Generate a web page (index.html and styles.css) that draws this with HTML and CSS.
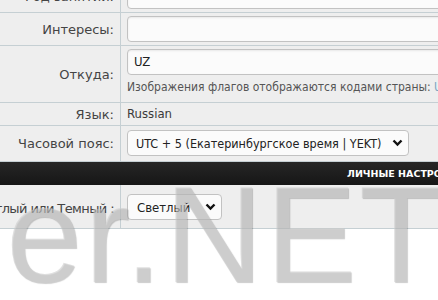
FILE: index.html
```html
<!DOCTYPE html>
<html lang="ru">

<head>
  <meta charset="UTF-8">
  <meta name="viewport" content="width=device-width, initial-scale=1.0">
  <title>Настройки профиля</title>
  <link rel="stylesheet" href="styles.css">
</head>

<body>
  <div class="form">
    <div class="row">
      <div class="label"><span>Род занятий:</span></div>
      <div class="value"><div class="input"></div></div>
    </div>
    <div class="row">
      <div class="label"><span>Интересы:</span></div>
      <div class="value"><div class="input"></div></div>
    </div>
    <div class="row">
      <div class="label"><span>Откуда:</span></div>
      <div class="value">
        <div class="input">UZ</div>
        <p class="hint">Изображения флагов отображаются кодами страны: <span class="flag">UZ</span></p>
      </div>
    </div>
    <div class="row row-plain">
      <div class="label"><span>Язык:</span></div>
      <div class="value">Russian</div>
    </div>
    <div class="row row-zone">
      <div class="label"><span>Часовой пояс:</span></div>
      <div class="value">
        <div class="select select-wide">
          <span>UTC + 5 (Екатеринбургское время | YEKT)</span>
          <svg width="11" height="8" viewBox="0 0 11 8"><path d="M1.5 1.5 L5.5 5.5 L9.5 1.5" fill="none" stroke="#111" stroke-width="2.4"/></svg>
        </div>
      </div>
    </div>
    <div class="section">Личные настройки</div>
    <div class="row row-last">
      <div class="label"><span>Светлый или Темный :</span></div>
      <div class="value">
        <div class="select select-small">
          <span>Светлый</span>
          <svg width="11" height="8" viewBox="0 0 11 8"><path d="M1.5 1.5 L5.5 5.5 L9.5 1.5" fill="none" stroke="#111" stroke-width="2.4"/></svg>
        </div>
      </div>
    </div>
  </div>

  <div class="watermark">er.NET</div>
</body>

</html>
```

FILE: styles.css
```css
body {
  margin: 0;
  padding: 0;
  background-color: #ffffff;
  font-family: "DejaVu Sans Condensed", "DejaVu Sans", sans-serif;
  font-size: 13px;
  color: #3a3a3a;
  overflow: hidden;
  height: 300px;
  position: relative;
}

.form {
  margin-top: -20px;
  width: 100%;
}

.row {
  display: grid;
  grid-template-columns: 121px 1fr;
  background-color: #eeeeee;
  border-bottom: 1px solid #c5cfd3;
}

.label {
  display: flex;
  justify-content: flex-end;
  align-items: center;
  white-space: nowrap;
  overflow: hidden;
  padding-right: 6px;
  border-right: 1px solid #c5cfd3;
  font-family: "DejaVu Sans", sans-serif;
  font-size: 13px;
  color: #444;
}

.value {
  padding: 3px 6px;
  white-space: nowrap;
  overflow: hidden;
}

.input {
  height: 24px;
  line-height: 24px;
  width: 420px;
  padding: 0 6px;
  background-color: #fbfbfb;
  border: 1px solid #c2c2c2;
  border-radius: 4px;
  box-shadow: inset 0 1px 2px rgba(0, 0, 0, 0.08);
  color: #222;
}

.hint {
  margin: 5px 0 5px;
  height: 14px;
  line-height: 14px;
  font-size: 12px;
  color: #555;
}

.flag {
  color: #7aa6c2;
}

.row-plain .value {
  height: 22px;
  line-height: 22px;
  padding: 0 6px;
}

.row-zone .value {
  padding: 4px 6px 5px;
}

.select {
  display: flex;
  align-items: center;
  justify-content: space-between;
  height: 24px;
  padding: 0 5px 0 8px;
  background-color: #fbfbfb;
  border: 1px solid #c2c2c2;
  border-radius: 4px;
  color: #222;
}

.select-wide {
  width: 267px;
  font-size: 12.5px;
}

.select-small {
  width: 79px;
  padding-left: 9px;
}

.section {
  height: 23px;
  line-height: 23px;
  padding-left: 347px;
  background: linear-gradient(#262626, #161616);
  color: #ffffff;
  font-family: "DejaVu Sans", sans-serif;
  font-size: 9.5px;
  font-weight: bold;
  text-transform: uppercase;
  white-space: nowrap;
  overflow: hidden;
}

.row-last .label {
  padding-top: 3px;
  letter-spacing: -0.6px;
}

.row-last .value {
  padding: 9px 6px 8px;
}

.watermark {
  position: absolute;
  left: 6px;
  top: 166px;
  font-family: "Liberation Sans", Arial, sans-serif;
  font-size: 137px;
  line-height: 137px;
  letter-spacing: 2px;
  color: rgba(205, 205, 205, 0.6);
  text-shadow: 1px 1px 1px rgba(0, 0, 0, 0.2);
  white-space: nowrap;
  pointer-events: none;
}
```
